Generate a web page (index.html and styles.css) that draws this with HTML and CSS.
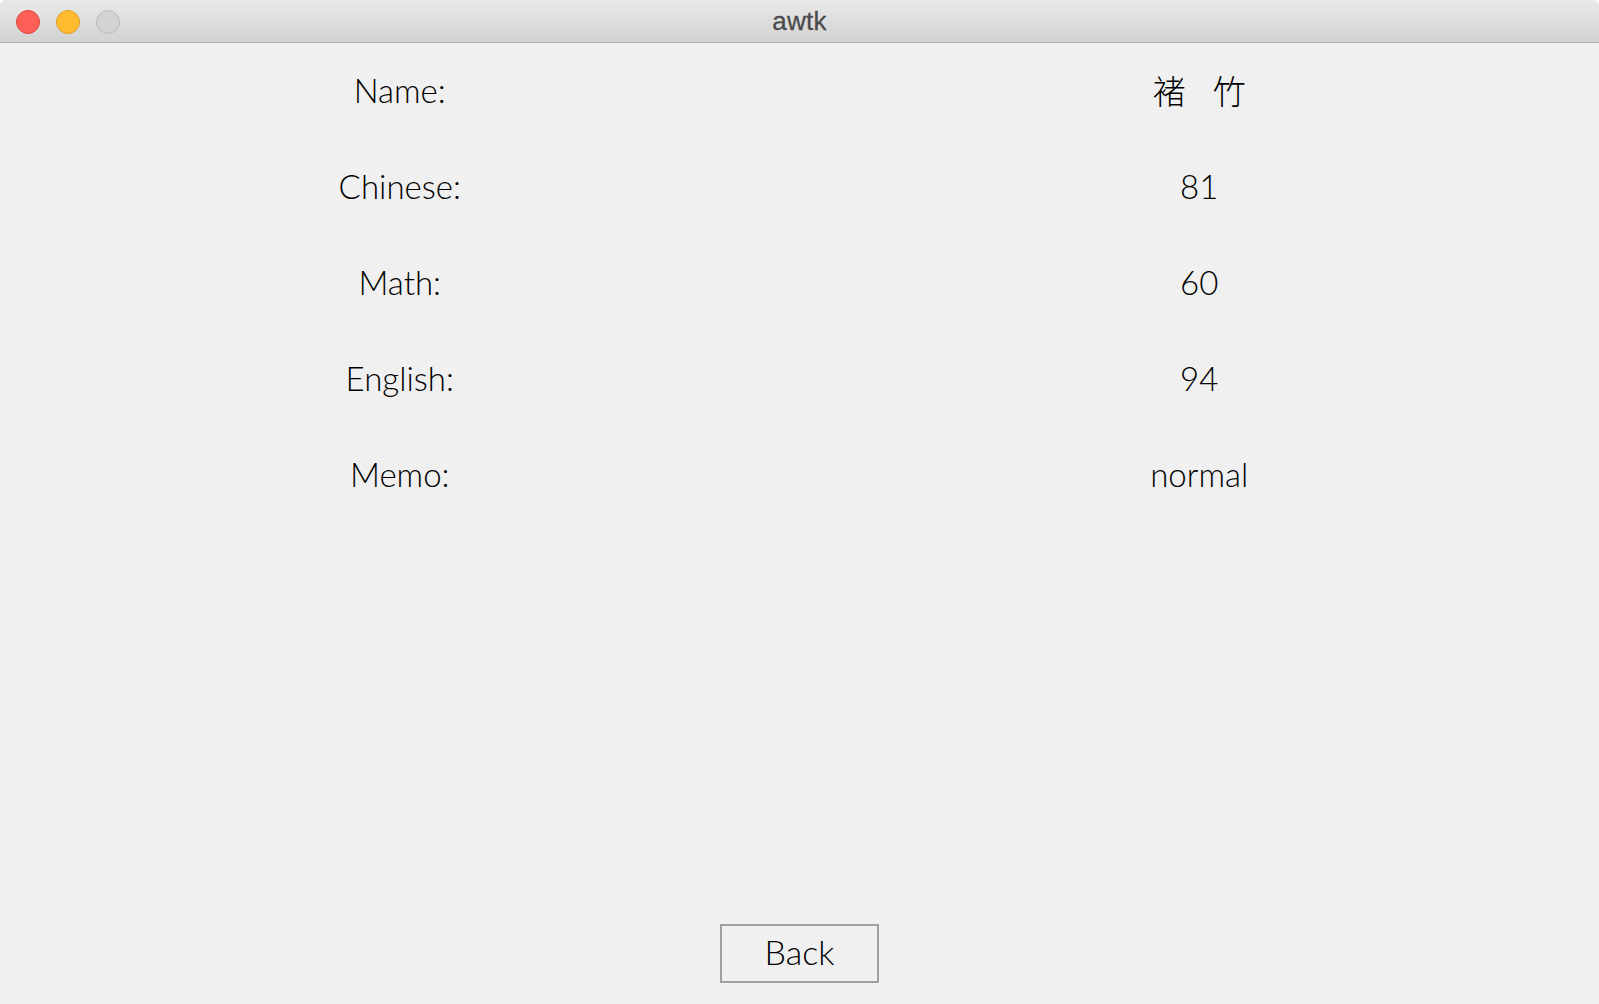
FILE: index.html
```html
<!DOCTYPE html>
<html>
<head>
<meta charset="utf-8">
<link rel="stylesheet" href="styles.css">
</head>
<body>
<div class="window">
  <div class="titlebar">
    <div class="lights">
      <span class="light red"></span>
      <span class="light yellow"></span>
      <span class="light gray"></span>
    </div>
    <div class="title">awtk</div>
  </div>
  <div class="content">
    <div class="row"><div class="label">Name:</div><div class="value">褚&nbsp;&nbsp;&nbsp;竹</div></div>
    <div class="row"><div class="label">Chinese:</div><div class="value">81</div></div>
    <div class="row"><div class="label">Math:</div><div class="value">60</div></div>
    <div class="row"><div class="label">English:</div><div class="value">94</div></div>
    <div class="row"><div class="label">Memo:</div><div class="value">normal</div></div>
    <div class="spacer"></div>
    <div class="footer"><button class="back">Back</button></div>
  </div>
</div>
</body>
</html>
```
FILE: styles.css
```css
html, body {
  margin: 0;
  padding: 0;
  width: 1599px;
  height: 1004px;
  overflow: hidden;
  background: #ffffff;
}
.window {
  width: 1599px;
  height: 1004px;
  display: flex;
  flex-direction: column;
  background: #f0f0f0;
  border-radius: 6px 6px 0 0;
  overflow: hidden;
}
.titlebar {
  height: 43px;
  flex: none;
  box-sizing: border-box;
  background: linear-gradient(#e9e9e9, #d2d2d2);
  border-bottom: 1px solid #acacac;
  position: relative;
  display: flex;
  align-items: center;
  justify-content: center;
}
.lights {
  position: absolute;
  left: 16px;
  top: 10px;
  display: flex;
  gap: 16px;
}
.light {
  width: 24px;
  height: 24px;
  border-radius: 50%;
  box-sizing: border-box;
}
.red { background: #fe5f57; border: 1px solid #e0443e; }
.yellow { background: #febc2e; border: 1px solid #dea123; }
.gray { background: #d3d3d3; border: 1px solid #bdbdbd; }
.title {
  font-family: "Liberation Sans", "DejaVu Sans", sans-serif;
  font-size: 26px;
  color: #4a4a4a;
  letter-spacing: 0.3px;
  -webkit-text-stroke: 0.3px #4a4a4a;
}
.content {
  flex: 1;
  display: flex;
  flex-direction: column;
  font-family: "Lato", "Noto Sans CJK SC", sans-serif;
  font-weight: 300;
  font-size: 33px;
  color: #000;
}
.row {
  height: 96px;
  box-sizing: border-box;
  padding-bottom: 3px;
  display: flex;
  align-items: center;
}
.label, .value {
  flex: 1;
  text-align: center;
}
.spacer { flex: 1; }
.footer {
  display: flex;
  justify-content: center;
  padding-bottom: 21px;
}
.back {
  width: 159px;
  height: 59px;
  box-sizing: border-box;
  border: 2px solid #a0a0a0;
  background: #f0f0f0;
  font-family: "Lato", sans-serif;
  font-weight: 300;
  font-size: 34px;
  color: #000;
  padding: 0 0 5px 0;
}
```
